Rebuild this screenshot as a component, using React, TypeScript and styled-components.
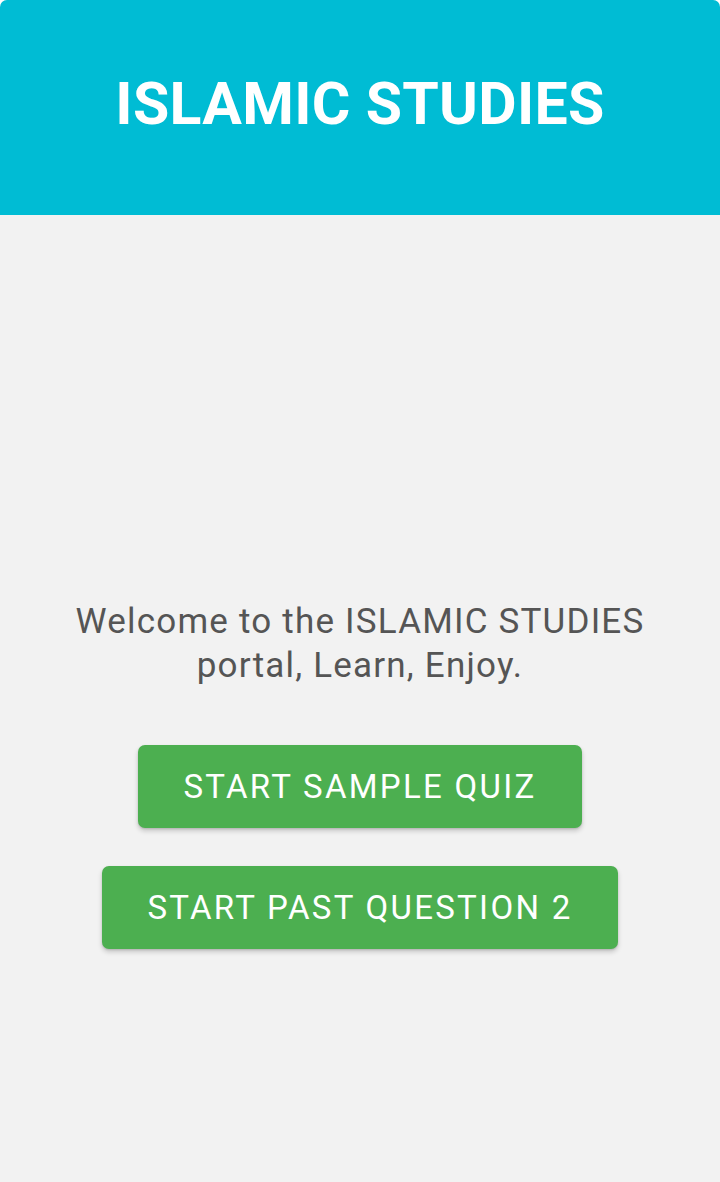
import React from 'react'
import styled, { createGlobalStyle } from 'styled-components'

const GlobalStyle = createGlobalStyle`
  html, body {
    margin: 0;
    padding: 0;
    background: #ffffff;
  }
  body {
    font-family: Roboto, "Liberation Sans", sans-serif;
  }
`

const Screen = styled.div`
  width: 720px;
  height: 1182px;
  display: flex;
  flex-direction: column;
  background: #f2f2f2;
  border-radius: 7px 7px 0 0;
  overflow: hidden;
`

const Header = styled.header`
  height: 215px;
  flex-shrink: 0;
  display: flex;
  align-items: center;
  justify-content: center;
  background: #00bcd4;
  padding-bottom: 8px;
  box-sizing: border-box;
`

const Title = styled.h1`
  margin: 0;
  color: #ffffff;
  font-family: Roboto, "Liberation Sans", sans-serif;
  font-weight: 700;
  font-size: 59px;
  letter-spacing: 0.3px;
`

const Body = styled.main`
  flex: 1;
  display: flex;
  flex-direction: column;
  align-items: center;
  padding-top: 385px;
`

const Welcome = styled.p`
  margin: 0 0 57px;
  width: 640px;
  text-align: center;
  color: #555555;
  font-size: 35px;
  line-height: 44px;
  font-weight: 400;
  letter-spacing: 1.2px;
`

const ButtonList = styled.div`
  display: flex;
  flex-direction: column;
  align-items: center;
  gap: 38px;
`

const ActionButton = styled.button`
  height: 83px;
  padding: 0 45px;
  border: none;
  border-radius: 7px;
  background: #4caf50;
  color: #ffffff;
  font-family: Roboto, "Liberation Sans", sans-serif;
  font-size: 33px;
  font-weight: 400;
  letter-spacing: 2.3px;
  text-transform: uppercase;
  box-shadow: 0 3px 5px rgba(0, 0, 0, 0.18), 0 1px 2px rgba(0, 0, 0, 0.12);
  cursor: pointer;
`

const App = () => {
  return (
    <>
      <GlobalStyle />
      <Screen>
        <Header>
          <Title>ISLAMIC STUDIES</Title>
        </Header>
        <Body>
          <Welcome>Welcome to the ISLAMIC STUDIES portal, Learn, Enjoy.</Welcome>
          <ButtonList>
            <ActionButton>Start Sample Quiz</ActionButton>
            <ActionButton>Start Past Question 2</ActionButton>
          </ButtonList>
        </Body>
      </Screen>
    </>
  )
}

export default App
